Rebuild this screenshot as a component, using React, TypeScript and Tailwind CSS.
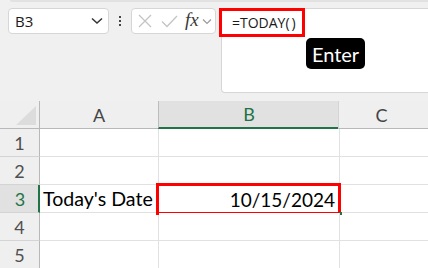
import React from "react";

const cellFont = { fontFamily: "Lato, 'Liberation Sans', sans-serif" };

function RowHeader({ n, selected }: { n: number; selected?: boolean }) {
  return (
    <div
      className={
        "w-[40px] h-[28px] flex items-center justify-center border-b border-[#d4d4d4] border-r " +
        (selected
          ? "bg-[#e1e1e1] text-[#217346] border-r-[#217346] border-r-2 pl-[2px]"
          : "bg-[#efefef] text-[#505050] border-r-[#b8b8b8]")
      }
    >
      <span className="text-[18px] leading-none" style={cellFont}>
        {n}
      </span>
    </div>
  );
}

export default function App() {
  const rows = [1, 2, 3, 4, 5];
  return (
    <div
      className="w-[428px] h-[268px] bg-[#f0f0f0] overflow-hidden flex flex-col"
      style={{ fontFamily: "'Open Sans', 'Liberation Sans', sans-serif" }}
    >
      <div className="h-[2px] ml-[10px] bg-[#e2e2e2] rounded-bl-[3px] shrink-0" />
      {/* formula row */}
      <div className="flex items-start pt-[6px] pl-[8px] h-[91px] shrink-0">
        <div className="w-[101px] h-[26px] bg-white border border-[#d6d6d6] rounded-[4px] flex items-center justify-between pl-[6px] pr-[5px]">
          <span className="text-[15px] text-[#1a1a1a] leading-none">B3</span>
          <svg width="12" height="8" viewBox="0 0 12 8">
            <path d="M1 1.5 L6 6 L11 1.5" fill="none" stroke="#333" strokeWidth="1.5" />
          </svg>
        </div>
        <div className="w-[22px] h-[26px] flex flex-col items-center justify-center gap-[2px]">
          <div className="w-[2px] h-[2px] bg-[#444]" />
          <div className="w-[2px] h-[2px] bg-[#444]" />
          <div className="w-[2px] h-[2px] bg-[#444]" />
        </div>
        <div className="w-[85px] h-[26px] bg-white border border-[#d6d6d6] rounded-[4px] flex items-center pl-[5px]">
          <svg width="14" height="14" viewBox="0 0 14 14" className="ml-[1px]">
            <path d="M1 1 L13 13 M13 1 L1 13" stroke="#c4c4c4" strokeWidth="1.3" fill="none" />
          </svg>
          <svg width="17" height="13" viewBox="0 0 17 13" className="ml-[9px]">
            <path d="M1 6.5 L6 11.5 L16 1" stroke="#c4c4c4" strokeWidth="1.3" fill="none" />
          </svg>
          <span
            className="ml-[7px] text-[19px] italic text-[#3a3a3a] leading-none -mt-[3px]"
            style={{ fontFamily: "'Liberation Serif', serif" }}
          >
            fx
          </span>
          <svg width="10" height="7" viewBox="0 0 10 7" className="ml-[3px]">
            <path d="M1 1.5 L5 5.5 L9 1.5" fill="none" stroke="#9a9a9a" strokeWidth="1.2" />
          </svg>
        </div>
        <div className="relative ml-[5px] flex-1 h-[85px] bg-white border border-[#d6d6d6] border-r-0 rounded-bl-[4px] rounded-tl-[4px]">
          <div className="absolute left-[-3px] top-[-1px] w-[86px] h-[29px] border-[3px] border-[#ff0000] flex items-center pl-[10px]">
            <span className="text-[14px] text-[#1a1a1a] leading-none whitespace-nowrap">
              =TODAY(<span className="ml-[2px]">)</span>
            </span>
          </div>
          <div className="absolute left-[84px] top-[29px] w-[59px] h-[31px] bg-black rounded-[5px] flex items-center justify-center">
            <span className="text-white text-[20px] leading-none" style={cellFont}>
              Enter
            </span>
          </div>
        </div>
      </div>
      <div className="h-[8px] shrink-0" />
      {/* grid */}
      <div className="flex flex-col">
        {/* header */}
        <div className="flex h-[28px]">
          <div className="w-[40px] h-[28px] border-r border-[#b8b8b8] border-b border-b-[#b8b8b8] bg-[#efefef] flex items-end justify-end pr-[3px] pb-[3px]">
            <svg width="20" height="19" viewBox="0 0 20 19">
              <path d="M20 0 L20 19 L0 19 Z" fill="#dcdcdc" />
            </svg>
          </div>
          <div className="w-[118px] h-[28px] bg-[#efefef] border-b border-[#b8b8b8] flex items-center justify-center">
            <span className="text-[18px] text-[#444] leading-none" style={cellFont}>A</span>
          </div>
          <div className="w-[181px] h-[28px] bg-[#e1e1e1] border-l border-[#bdbdbd] border-b-2 border-b-[#217346] flex items-center justify-center">
            <span className="text-[18px] text-[#217346] leading-none" style={cellFont}>B</span>
          </div>
          <div className="flex-1 h-[28px] bg-[#efefef] border-l border-[#d4d4d4] border-b border-b-[#b8b8b8] flex items-center justify-center -ml-[1px] pr-[4px]">
            <span className="text-[18px] text-[#444] leading-none" style={cellFont}>C</span>
          </div>
        </div>
        {rows.map((r) => (
          <div key={r} className="flex h-[28px]">
            <RowHeader n={r} selected={r === 3} />
            <div className="w-[119px] h-[28px] bg-white border-r border-b border-[#e1e1e1] flex items-center pl-[3px] pt-[1px]">
              {r === 3 && (
                <span className="text-[19.6px] text-black leading-none whitespace-nowrap" style={cellFont}>
                  Today's Date
                </span>
              )}
            </div>
            <div className="w-[181px] h-[28px] bg-white border-r border-b border-[#e1e1e1] flex items-center justify-end pr-[4px] pt-[1px] relative">
              {r === 3 && (
                <>
                  <span className="text-[19px] text-black leading-none" style={cellFont}>
                    10/15/2024
                  </span>
                  <div className="absolute left-[-3px] top-[-2px] w-[185px] h-[32px] border-[3px] border-[#ff0000]" />
                  <div className="absolute right-[-3px] bottom-[-3px] w-[3px] h-[3px] bg-[#217346]" />
                </>
              )}
            </div>
            <div className="flex-1 h-[28px] bg-white border-b border-[#e1e1e1]" />
          </div>
        ))}
      </div>
    </div>
  );
}
